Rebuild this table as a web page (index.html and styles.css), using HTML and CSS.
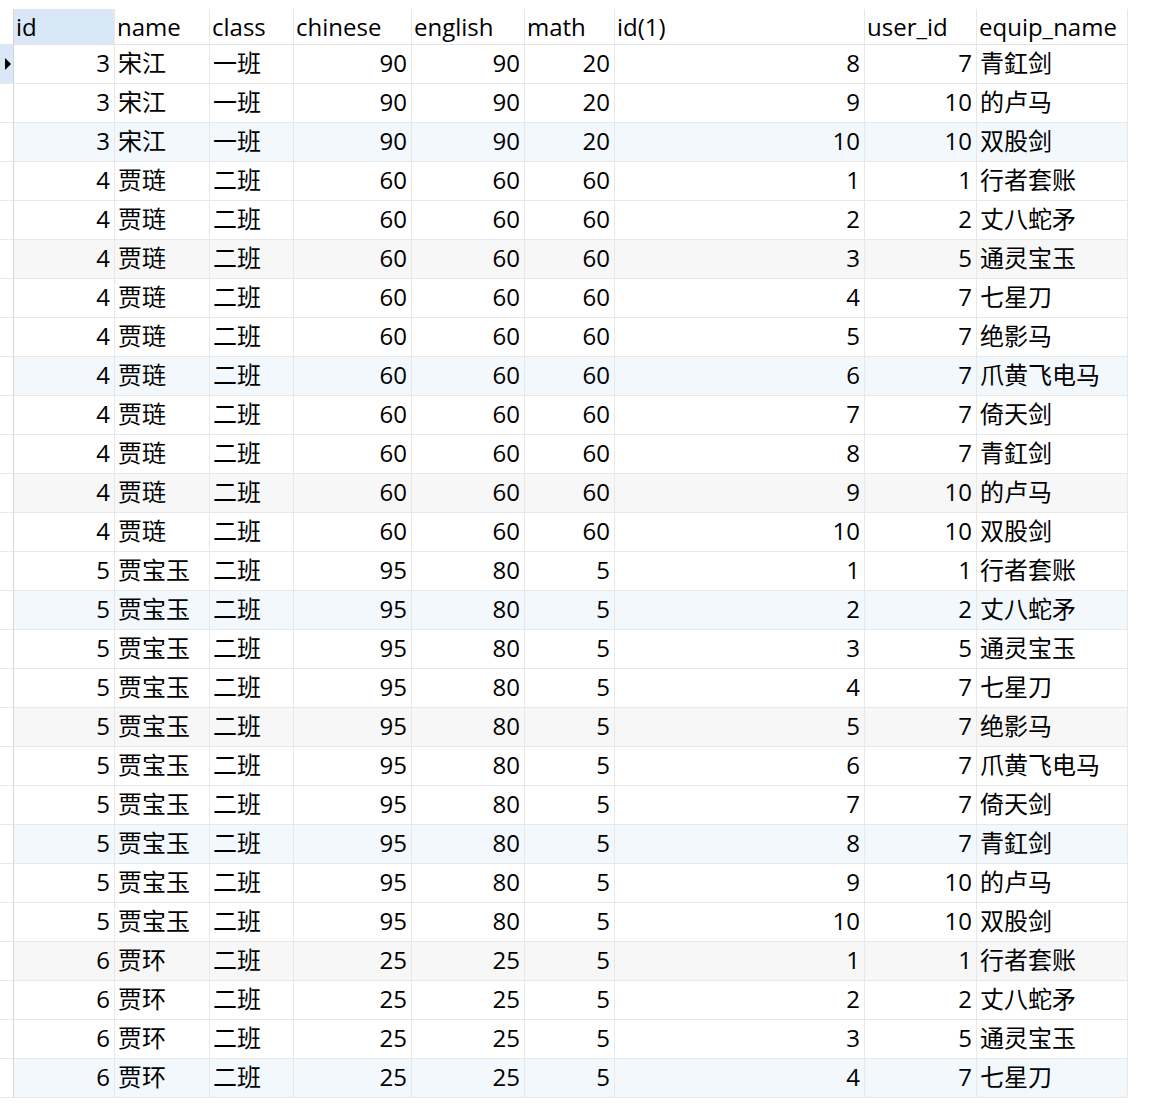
FILE: index.html
```html
<!DOCTYPE html>
<html lang="zh-CN">
<head>
<meta charset="utf-8">
<title>Result</title>
<link rel="stylesheet" href="styles.css">
</head>
<body>
<div class="grid">
  <div class="row head">
    <div class="c gut"></div>
    <div class="c sel">id</div>
    <div class="c">name</div>
    <div class="c">class</div>
    <div class="c">chinese</div>
    <div class="c">english</div>
    <div class="c">math</div>
    <div class="c">id(1)</div>
    <div class="c">user_id</div>
    <div class="c">equip_name</div>
  </div>

  <div class="row"><div class="c gut cur"><span class="tri"></span></div><div class="c n">3</div><div class="c">宋江</div><div class="c">一班</div><div class="c n">90</div><div class="c n">90</div><div class="c n">20</div><div class="c n">8</div><div class="c n">7</div><div class="c">青釭剑</div></div>
  <div class="row"><div class="c gut"></div><div class="c n">3</div><div class="c">宋江</div><div class="c">一班</div><div class="c n">90</div><div class="c n">90</div><div class="c n">20</div><div class="c n">9</div><div class="c n">10</div><div class="c">的卢马</div></div>
  <div class="row blue"><div class="c gut"></div><div class="c n">3</div><div class="c">宋江</div><div class="c">一班</div><div class="c n">90</div><div class="c n">90</div><div class="c n">20</div><div class="c n">10</div><div class="c n">10</div><div class="c">双股剑</div></div>

  <div class="row"><div class="c gut"></div><div class="c n">4</div><div class="c">贾琏</div><div class="c">二班</div><div class="c n">60</div><div class="c n">60</div><div class="c n">60</div><div class="c n">1</div><div class="c n">1</div><div class="c">行者套账</div></div>
  <div class="row"><div class="c gut"></div><div class="c n">4</div><div class="c">贾琏</div><div class="c">二班</div><div class="c n">60</div><div class="c n">60</div><div class="c n">60</div><div class="c n">2</div><div class="c n">2</div><div class="c">丈八蛇矛</div></div>
  <div class="row gray"><div class="c gut"></div><div class="c n">4</div><div class="c">贾琏</div><div class="c">二班</div><div class="c n">60</div><div class="c n">60</div><div class="c n">60</div><div class="c n">3</div><div class="c n">5</div><div class="c">通灵宝玉</div></div>
  <div class="row"><div class="c gut"></div><div class="c n">4</div><div class="c">贾琏</div><div class="c">二班</div><div class="c n">60</div><div class="c n">60</div><div class="c n">60</div><div class="c n">4</div><div class="c n">7</div><div class="c">七星刀</div></div>
  <div class="row"><div class="c gut"></div><div class="c n">4</div><div class="c">贾琏</div><div class="c">二班</div><div class="c n">60</div><div class="c n">60</div><div class="c n">60</div><div class="c n">5</div><div class="c n">7</div><div class="c">绝影马</div></div>
  <div class="row blue"><div class="c gut"></div><div class="c n">4</div><div class="c">贾琏</div><div class="c">二班</div><div class="c n">60</div><div class="c n">60</div><div class="c n">60</div><div class="c n">6</div><div class="c n">7</div><div class="c">爪黄飞电马</div></div>
  <div class="row"><div class="c gut"></div><div class="c n">4</div><div class="c">贾琏</div><div class="c">二班</div><div class="c n">60</div><div class="c n">60</div><div class="c n">60</div><div class="c n">7</div><div class="c n">7</div><div class="c">倚天剑</div></div>
  <div class="row"><div class="c gut"></div><div class="c n">4</div><div class="c">贾琏</div><div class="c">二班</div><div class="c n">60</div><div class="c n">60</div><div class="c n">60</div><div class="c n">8</div><div class="c n">7</div><div class="c">青釭剑</div></div>
  <div class="row gray"><div class="c gut"></div><div class="c n">4</div><div class="c">贾琏</div><div class="c">二班</div><div class="c n">60</div><div class="c n">60</div><div class="c n">60</div><div class="c n">9</div><div class="c n">10</div><div class="c">的卢马</div></div>
  <div class="row"><div class="c gut"></div><div class="c n">4</div><div class="c">贾琏</div><div class="c">二班</div><div class="c n">60</div><div class="c n">60</div><div class="c n">60</div><div class="c n">10</div><div class="c n">10</div><div class="c">双股剑</div></div>

  <div class="row"><div class="c gut"></div><div class="c n">5</div><div class="c">贾宝玉</div><div class="c">二班</div><div class="c n">95</div><div class="c n">80</div><div class="c n">5</div><div class="c n">1</div><div class="c n">1</div><div class="c">行者套账</div></div>
  <div class="row blue"><div class="c gut"></div><div class="c n">5</div><div class="c">贾宝玉</div><div class="c">二班</div><div class="c n">95</div><div class="c n">80</div><div class="c n">5</div><div class="c n">2</div><div class="c n">2</div><div class="c">丈八蛇矛</div></div>
  <div class="row"><div class="c gut"></div><div class="c n">5</div><div class="c">贾宝玉</div><div class="c">二班</div><div class="c n">95</div><div class="c n">80</div><div class="c n">5</div><div class="c n">3</div><div class="c n">5</div><div class="c">通灵宝玉</div></div>
  <div class="row"><div class="c gut"></div><div class="c n">5</div><div class="c">贾宝玉</div><div class="c">二班</div><div class="c n">95</div><div class="c n">80</div><div class="c n">5</div><div class="c n">4</div><div class="c n">7</div><div class="c">七星刀</div></div>
  <div class="row gray"><div class="c gut"></div><div class="c n">5</div><div class="c">贾宝玉</div><div class="c">二班</div><div class="c n">95</div><div class="c n">80</div><div class="c n">5</div><div class="c n">5</div><div class="c n">7</div><div class="c">绝影马</div></div>
  <div class="row"><div class="c gut"></div><div class="c n">5</div><div class="c">贾宝玉</div><div class="c">二班</div><div class="c n">95</div><div class="c n">80</div><div class="c n">5</div><div class="c n">6</div><div class="c n">7</div><div class="c">爪黄飞电马</div></div>
  <div class="row"><div class="c gut"></div><div class="c n">5</div><div class="c">贾宝玉</div><div class="c">二班</div><div class="c n">95</div><div class="c n">80</div><div class="c n">5</div><div class="c n">7</div><div class="c n">7</div><div class="c">倚天剑</div></div>
  <div class="row blue"><div class="c gut"></div><div class="c n">5</div><div class="c">贾宝玉</div><div class="c">二班</div><div class="c n">95</div><div class="c n">80</div><div class="c n">5</div><div class="c n">8</div><div class="c n">7</div><div class="c">青釭剑</div></div>
  <div class="row"><div class="c gut"></div><div class="c n">5</div><div class="c">贾宝玉</div><div class="c">二班</div><div class="c n">95</div><div class="c n">80</div><div class="c n">5</div><div class="c n">9</div><div class="c n">10</div><div class="c">的卢马</div></div>
  <div class="row"><div class="c gut"></div><div class="c n">5</div><div class="c">贾宝玉</div><div class="c">二班</div><div class="c n">95</div><div class="c n">80</div><div class="c n">5</div><div class="c n">10</div><div class="c n">10</div><div class="c">双股剑</div></div>

  <div class="row gray"><div class="c gut"></div><div class="c n">6</div><div class="c">贾环</div><div class="c">二班</div><div class="c n">25</div><div class="c n">25</div><div class="c n">5</div><div class="c n">1</div><div class="c n">1</div><div class="c">行者套账</div></div>
  <div class="row"><div class="c gut"></div><div class="c n">6</div><div class="c">贾环</div><div class="c">二班</div><div class="c n">25</div><div class="c n">25</div><div class="c n">5</div><div class="c n">2</div><div class="c n">2</div><div class="c">丈八蛇矛</div></div>
  <div class="row"><div class="c gut"></div><div class="c n">6</div><div class="c">贾环</div><div class="c">二班</div><div class="c n">25</div><div class="c n">25</div><div class="c n">5</div><div class="c n">3</div><div class="c n">5</div><div class="c">通灵宝玉</div></div>
  <div class="row blue"><div class="c gut"></div><div class="c n">6</div><div class="c">贾环</div><div class="c">二班</div><div class="c n">25</div><div class="c n">25</div><div class="c n">5</div><div class="c n">4</div><div class="c n">7</div><div class="c">七星刀</div></div>
</div>
</body>
</html>
```

FILE: styles.css
```css
html, body {
  margin: 0;
  padding: 0;
  background: #ffffff;
}

body {
  padding-top: 9px;
  font-family: "Open Sans", "Noto Sans CJK SC", sans-serif;
  font-size: 24px;
  color: #000000;
}

.grid {
  display: flex;
  flex-direction: column;
  width: 1128px;
}

.row {
  display: grid;
  grid-template-columns: 14px 101px 95px 84px 118px 113px 90px 250px 112px 151px;
  height: 39px;
}

.row.head {
  height: 36px;
}

.c {
  box-sizing: border-box;
  border-right: 1px solid #e8e8e8;
  border-bottom: 1px solid #e8e8e8;
  padding: 0 3px 0 3px;
  line-height: 36px;
  white-space: nowrap;
  overflow: hidden;
}

.head .c {
  line-height: 35px;
  padding-left: 2px;
  border-bottom-color: #e3e3e3;
}

.c.n {
  text-align: right;
  padding-right: 4px;
}

.c.gut {
  padding: 0;
  border-right-color: #d6d6d6;
  background: #ffffff;
  display: flex;
  align-items: center;
}

.c.gut.cur {
  background: #d9e8f6;
}

.tri {
  display: block;
  margin-left: 5px;
  width: 0;
  height: 0;
  border-top: 6px solid transparent;
  border-bottom: 6px solid transparent;
  border-left: 6px solid #000000;
}

.head .sel {
  background: #d9e8f6;
}

.row.blue .c:not(.gut) {
  background: #f3f8fd;
}

.row.gray .c:not(.gut) {
  background: #f7f7f7;
}
```
